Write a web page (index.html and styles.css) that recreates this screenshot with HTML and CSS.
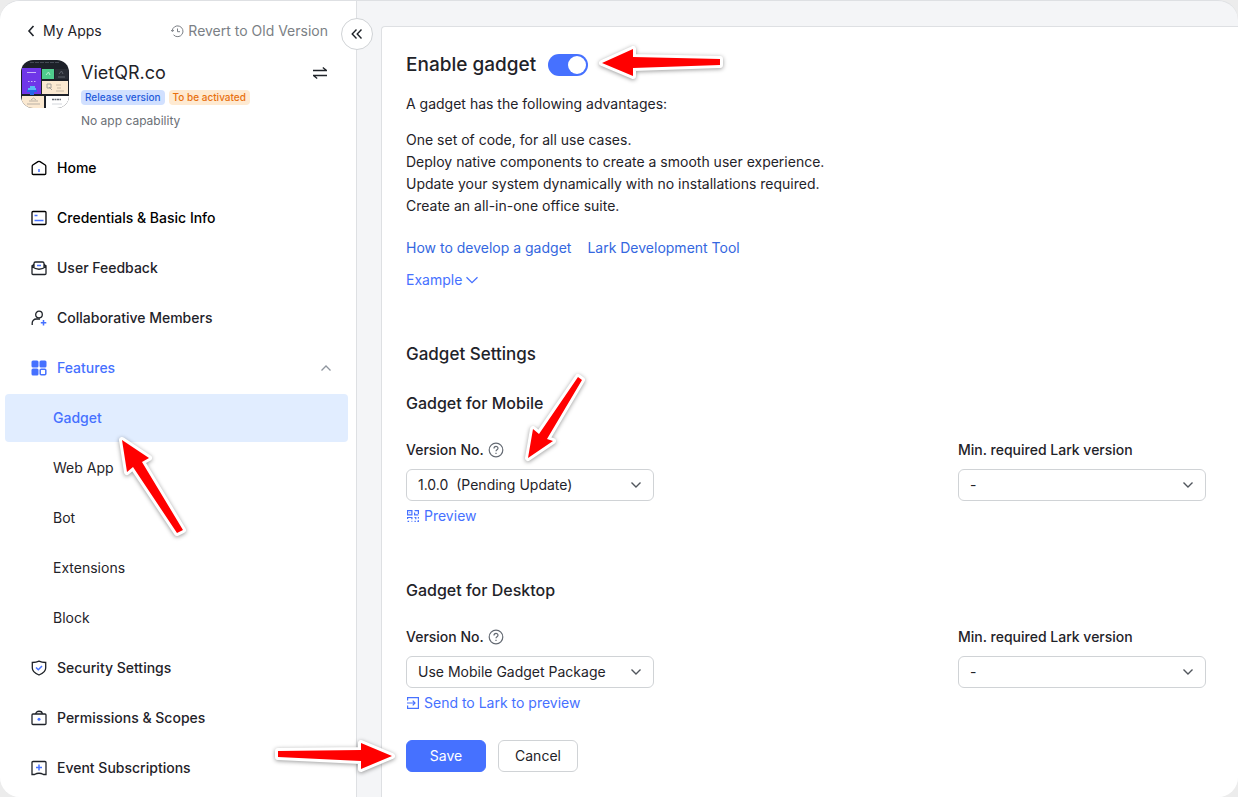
FILE: index.html
```html
<!DOCTYPE html>
<html lang="en">
<head>
    <meta charset="UTF-8">
    <meta name="viewport" content="width=device-width, initial-scale=1.0">
    <title>VietQR.co - Gadget</title>
    <link rel="stylesheet" href="styles.css">
</head>
<body>
    <div class="app">
        <aside class="sidebar">
            <button type="button" class="collapse" aria-label="Collapse sidebar">
                <svg width="14" height="14" viewBox="0 0 14 14"><path d="M6.5 2.5 2.2 7l4.300 4.500M11.500 2.500 7.200 7l4.300 4.500"/></svg>
            </button>
            <div class="sidebar-top">
                <a href="#" class="back">
                    <svg width="8" height="12" viewBox="0 0 8 12"><path d="M6.5 1 2 6l4.500 5"/></svg>
                    My Apps
                </a>
                <a href="#" class="revert">
                    <svg width="13" height="13" viewBox="0 0 13 13"><path d="M1.2 6A5.400 5.400 0 1 1 2.500 9.800M0 5l1.200 1.500L3 5.300M6.500 3.500v3.200H9"/></svg>
                    Revert to Old Version
                </a>
            </div>
            <div class="app-info">
                <svg class="logo" width="48" height="48" viewBox="0 0 48 48">
                    <rect width="48" height="48" fill="#1d2129"/>
                    <path d="M9 2.5h30" stroke="#454b56" stroke-dasharray="4 1"/>
                    <rect x="1" y="8" width="19" height="26" fill="#6f36e8"/>
                    <path d="M6 12.5h9" stroke="#c9b6f8"/>
                    <path d="M7 21.5h1.5M10 21.5h1.5M13 21.5h1.5" stroke="#c9b6f8"/>
                    <path d="M7 31v-3h2v-2h5v2h1v3z" fill="#58b9f5"/>
                    <path d="M6 30h10v2h-3v3H9v-3H6z" fill="#2467e8"/>
                    <rect x="21" y="9" width="12" height="10" fill="#4fcc8d"/>
                    <path d="m25 15 2.500-3 1.500 3" fill="none" stroke="#b5ecd0"/>
                    <rect x="34" y="9" width="13" height="10" fill="#292d35"/>
                    <path d="m38 14 2.5-3 1.5 3M37 17h7" fill="none" stroke="#5f646d"/>
                    <rect x="21" y="21" width="26" height="13" fill="#fbe9d1"/>
                    <path d="M26 24h4v4h-4zM28 27l3 3" fill="none" stroke="#a5a19c"/>
                    <path d="M35 25h5M36 28h4M35 31h8" stroke="#c9bba8"/>
                    <rect x="1" y="36" width="22" height="12" fill="#fbe9d1"/>
                    <path d="m10 40 2.5-2 2.500 2M8 41h9M6 44h13" fill="none" stroke="#b9b0a5"/>
                    <rect x="25" y="36" width="23" height="12" fill="#fff"/>
                    <path d="M31 39.500h9" stroke="#6d727a" stroke-width="1.500" stroke-dasharray="2 .5"/>
                    <path d="M31 44h10" stroke="#d4d7dc"/>
                </svg>
                <div class="app-text">
                    <div class="app-name">VietQR.co</div>
                    <div class="badges">
                        <span class="badge badge-blue">Release version</span>
                        <span class="badge badge-orange">To be activated</span>
                    </div>
                    <div class="capability">No app capability</div>
                </div>
                <button type="button" class="swap" aria-label="Switch app">
                    <svg width="14" height="14" viewBox="0 0 14 14"><path d="M0 4.5h13.5L9.8 1.500M14 9.500H.5l3.700 3"/></svg>
                </button>
            </div>
            <nav class="menu">
                <a href="#" class="item strong">
                    <svg class="icon" viewBox="0 0 16 16"><path d="M1.200 6.200Q1.200 5.500 1.800 5L7 1.600Q8 1 9 1.600L14.200 5Q14.800 5.500 14.800 6.200V13.500a1 1 0 0 1-1 1H2.200a1 1 0 0 1-1-1z"/><path class="accent" d="M8 9v3"/></svg>
                    Home
                </a>
                <a href="#" class="item strong">
                    <svg class="icon" viewBox="0 0 16 16"><rect x="1" y="1.5" width="14" height="13" rx="1"/><path class="accent" d="M3.500 5.500h3M3.500 10.500h9"/></svg>
                    Credentials &amp; Basic Info
                </a>
                <a href="#" class="item">
                    <svg class="icon" viewBox="0 0 16 16"><path d="M3 7V3.5A1.500 1.500 0 0 1 4.500 2h7A1.500 1.500 0 0 1 13 3.500V7M1 6.500c4.500 3.500 9.500 3.500 14 0v7a1 1 0 0 1-1 1H2a1 1 0 0 1-1-1zM1 6.500 3 4M15 6.500 13 4"/><path class="accent" d="M6 5.500h4"/></svg>
                    User Feedback
                </a>
                <a href="#" class="item">
                    <svg class="icon" viewBox="0 0 16 16"><circle cx="8" cy="4.500" r="3.300"/><path d="M1.200 15v-2a4 4 0 0 1 4-4H9"/><path class="accent" d="M12.500 10v5.500M9.800 12.800h5.500"/></svg>
                    Collaborative Members
                </a>
                <a href="#" class="item active">
                    <svg class="icon" viewBox="0 0 16 16"><g class="fill"><rect x=".5" y=".5" width="7" height="7" rx="1.500"/><rect x="8.500" y=".5" width="7" height="7" rx="1.500"/><rect x=".5" y="8.500" width="7" height="7" rx="1.500"/></g><rect class="accent" x="9.200" y="9.200" width="5.600" height="5.600" rx="1"/></svg>
                    Features
                    <svg class="toggle-arrow" width="10" height="6" viewBox="0 0 10 6"><path d="m.5 5.500 4.500-4.500 4.500 4.500"/></svg>
                </a>
                <a href="#" class="item sub selected">Gadget</a>
                <a href="#" class="item sub">Web App</a>
                <a href="#" class="item sub">Bot</a>
                <a href="#" class="item sub">Extensions</a>
                <a href="#" class="item sub">Block</a>
                <a href="#" class="item">
                    <svg class="icon" viewBox="0 0 16 16"><path d="M8 1.200c2 1 4.300 1.300 6.700 1.300V8c0 3.500-3.500 5.700-6.700 7C4.800 13.700 1.300 11.500 1.300 8V2.500C3.700 2.500 6 2.200 8 1.200z"/><path class="accent" d="m5 7.500 2.300 2.300L11 6"/></svg>
                    Security Settings
                </a>
                <a href="#" class="item">
                    <svg class="icon" viewBox="0 0 16 16"><rect x="1" y="4" width="14" height="10.500" rx="1"/><path d="M4.700 4C4.700 .3 11.300 .3 11.300 4"/><circle class="dot" cx="8" cy="9.200" r="1.500"/></svg>
                    Permissions &amp; Scopes
                </a>
                <a href="#" class="item">
                    <svg class="icon" viewBox="0 0 16 16"><path d="M2 1.500h12a1 1 0 0 1 1 1v12h-2.500Q8 12 3.500 14.500H1v-12a1 1 0 0 1 1-1z"/><path class="accent" d="M8 4.500v6M5 7.500h6"/></svg>
                    Event Subscriptions
                </a>
            </nav>
        </aside>

        <main class="main">
            <form class="panel">
                <div class="title-row">
                    <label class="title" for="enable">Enable gadget</label>
                    <input type="checkbox" class="switch" id="enable" role="switch" checked>
                </div>
                <p class="intro">A gadget has the following advantages:</p>
                <p class="advantages">
                    One set of code, for all use cases.<br>
                    Deploy native components to create a smooth user experience.<br>
                    Update your system dynamically with no installations required.<br>
                    Create an all-in-one office suite.
                </p>
                <div class="links">
                    <a href="#">How to develop a gadget</a>
                    <a href="#">Lark Development Tool</a>
                </div>
                <a href="#" class="example">
                    Example
                    <svg width="12" height="8" viewBox="0 0 12 8"><path d="m.5 1.200 5.500 5.500 5.500-5.500"/></svg>
                </a>

                <h2>Gadget Settings</h2>

                <section class="platform">
                    <h3>Gadget for Mobile</h3>
                    <div class="fields">
                        <div class="field">
                            <div class="field-label">
                                <label for="mobile-version">Version No.</label>
                                <svg class="help" width="16" height="16" viewBox="0 0 16 16"><circle cx="8" cy="8" r="6.800"/><path d="M6 6.500C6 3.800 10 3.800 10 6.300 10 7.800 8 7.800 8 9.300M8 10.700v1.200"/></svg>
                            </div>
                            <div class="select">
                                <select id="mobile-version"><option>1.0.0 &nbsp;(Pending Update)</option></select>
                                <svg width="10" height="6" viewBox="0 0 10 6"><path d="m.5 .5 4.500 4.500L9.500 .5"/></svg>
                            </div>
                            <a href="#" class="preview">
                                <svg width="14" height="14" viewBox="0 0 14 14"><path d="M1.600 1.600h4.300v4.300H1.600zM8.600 1.600h3.800v3.300M8.600 3.500v2.400h3.800M1.600 10V8.500h4.300v1.800M1.600 12.400h1.500M5.500 12.400h.8M8.500 8.500h1.300v1.800M12.400 8v1.500M8.500 12.400h1.300M12.400 11.200v1.200h-1M3.500 3.700h.7"/></svg>
                                Preview
                            </a>
                        </div>
                        <div class="field">
                            <div class="field-label"><label for="mobile-min">Min. required Lark version</label></div>
                            <div class="select">
                                <select id="mobile-min"><option>-</option></select>
                                <svg width="10" height="6" viewBox="0 0 10 6"><path d="m.5 .5 4.500 4.500L9.500 .5"/></svg>
                            </div>
                        </div>
                    </div>
                </section>

                <section class="platform">
                    <h3>Gadget for Desktop</h3>
                    <div class="fields">
                        <div class="field">
                            <div class="field-label">
                                <label for="desktop-version">Version No.</label>
                                <svg class="help" width="16" height="16" viewBox="0 0 16 16"><circle cx="8" cy="8" r="6.800"/><path d="M6 6.500C6 3.800 10 3.800 10 6.300 10 7.800 8 7.800 8 9.300M8 10.700v1.200"/></svg>
                            </div>
                            <div class="select">
                                <select id="desktop-version"><option>Use Mobile Gadget Package</option></select>
                                <svg width="10" height="6" viewBox="0 0 10 6"><path d="m.5 .5 4.500 4.500L9.500 .5"/></svg>
                            </div>
                            <a href="#" class="preview">
                                <svg width="14" height="14" viewBox="0 0 14 14"><path d="M1.600 4.500V1.600h10.800v10.800H1.600V9.500M1 7h8M6.700 4.700 9 7 6.700 9.300"/></svg>
                                Send to Lark to preview
                            </a>
                        </div>
                        <div class="field">
                            <div class="field-label"><label for="desktop-min">Min. required Lark version</label></div>
                            <div class="select">
                                <select id="desktop-min"><option>-</option></select>
                                <svg width="10" height="6" viewBox="0 0 10 6"><path d="m.5 .5 4.500 4.500L9.500 .5"/></svg>
                            </div>
                        </div>
                    </div>
                </section>

                <div class="actions">
                    <button type="button" class="btn btn-primary">Save</button>
                    <button type="button" class="btn">Cancel</button>
                </div>
            </form>
        </main>
    </div>

    <!-- tutorial arrows -->
    <svg class="arrows" width="730" height="790" viewBox="0 0 730 790" aria-hidden="true">
        <path d="M602 63 633 49V57L720 59V65L633 68V76z"/>
        <path d="M122 440 149 458 142 462 183 530 177 533 133 467 127 472z"/>
        <path d="M528 458 533 429 539 434 578 377 582 380 547 439 553 441z"/>
        <path d="M392 756 361 743V750L278 751V757L361 761V769z"/>
    </svg>
</body>
</html>
```
FILE: styles.css
```css
* {
    box-sizing: border-box;
}
body {
    margin: 0;
    background: #ececec;
    color: #1f2329;
    font-family: Inter, "Liberation Sans", sans-serif;
    font-size: 14px;
    line-height: 22px;
}
a {
    color: inherit;
    text-decoration: none;
}
button {
    padding: 0;
    border: none;
    background: none;
    color: inherit;
    font: inherit;
    cursor: pointer;
}
svg {
    flex: none;
    fill: none;
    stroke: currentColor;
}
.app {
    display: flex;
    min-height: 100vh;
    border: solid #dee0e3;
    border-width: 1px 0 0;
    border-radius: 20px;
    background: #f4f5f7;
    overflow: hidden;
}

/* sidebar */
.sidebar {
    position: relative;
    flex: none;
    width: 357px;
    padding-top: 19px;
    border-right: 1px solid #dee0e3;
    background: #fff;
}
.collapse {
    position: absolute;
    top: 17px;
    right: -17px;
    display: flex;
    align-items: center;
    justify-content: center;
    width: 32px;
    height: 32px;
    border: 1px solid #d0d3d6;
    border-radius: 50%;
    background: #fff;
}
.collapse svg {
    stroke-width: 1.4;
}
.sidebar-top {
    display: flex;
    align-items: center;
    justify-content: space-between;
    padding: 0 28px 0 27px;
}
.back, .revert {
    display: flex;
    align-items: center;
}
.back {
    gap: 8px;
}
.back svg {
    stroke-width: 1.6;
}
.revert {
    gap: 4px;
    color: #7b7f85;
}
.app-info {
    display: flex;
    align-items: flex-start;
    padding: 18px 29px 0 21px;
}
.logo {
    border-radius: 12px;
    stroke: none;
}
.app-text {
    flex: 1;
    margin-left: 12px;
}
.app-name {
    font-size: 18px;
    line-height: 26px;
}
.badges {
    display: flex;
    gap: 4px;
    margin-top: 4px;
}
.badge {
    padding: 0 4px;
    border-radius: 4px;
    font-size: 10px;
    font-weight: 500;
    line-height: 15px;
}
.badge-blue {
    background: #d1e0ff;
    color: #245bdb;
}
.badge-orange {
    background: #feead2;
    color: #e8700f;
}
.capability {
    margin-top: 5px;
    color: #6b6f76;
    font-size: 12px;
}
.swap {
    display: flex;
    margin-top: 6px;
}
.swap svg {
    stroke-width: 1.3;
}
.menu {
    display: flex;
    flex-direction: column;
    gap: 2px;
    padding: 12px 8px 5px 5px;
}
.item {
    display: flex;
    align-items: center;
    gap: 10px;
    height: 48px;
    padding: 0 17px 0 26px;
    border-radius: 4px;
    font-weight: 500;
}
.icon {
    width: 16px;
    height: 16px;
    stroke-width: 1.3;
}
.accent {
    stroke: #4671ff;
    stroke-width: 1.5;
}
.dot, .fill {
    fill: #4671ff;
    stroke: none;
}
.strong {
    color: #000;
}
.active, .selected {
    color: #4671ff;
}
.toggle-arrow {
    margin-left: auto;
    color: #8f959e;
    stroke-width: 1.3;
}
.sub {
    padding-left: 48px;
    font-weight: 400;
}
.selected {
    background: #e1edff;
    font-weight: 500;
}

/* content */
.main {
    display: flex;
    flex: 1;
    padding: 25px 0 0 24px;
}
.panel {
    flex: 1;
    padding: 24px 32px 25px 24px;
    border: solid #dee0e3;
    border-width: 1px 0 0 1px;
    border-top-left-radius: 4px;
    background: #fff;
}
.title-row {
    display: flex;
    align-items: center;
    gap: 12px;
}
.title {
    font-size: 19px;
    font-weight: 500;
    line-height: 28px;
}
.switch {
    appearance: none;
    width: 40px;
    height: 22px;
    margin: 0;
    padding: 2px;
    border-radius: 11px;
    background: #bbbfc4;
    cursor: pointer;
}
.switch::before {
    content: "";
    display: block;
    width: 18px;
    height: 18px;
    border-radius: 50%;
    background: #fff;
}
.switch:checked {
    background: #4671ff;
}
.switch:checked::before {
    margin-left: auto;
}
.intro, .advantages {
    margin: 14px 0 0;
}
.links {
    display: flex;
    gap: 16px;
    margin-top: 20px;
    color: #3467e0;
}
.example {
    display: flex;
    align-items: center;
    gap: 4px;
    width: fit-content;
    margin-top: 10px;
    color: #4671ff;
}
.example svg {
    stroke-width: 1.3;
}
h2 {
    margin: 49px 0 23px;
    font-size: 17px;
    font-weight: 500;
    line-height: 28px;
}
h3 {
    margin: 0 0 24px;
    font-size: 16px;
    font-weight: 500;
    line-height: 24px;
}
.platform + .platform {
    margin-top: 51px;
}
.fields {
    display: flex;
    justify-content: space-between;
    gap: 24px;
}
.field {
    width: 248px;
}
.field-label {
    display: flex;
    align-items: center;
    gap: 4px;
    margin-bottom: 8px;
    font-weight: 500;
}
.help {
    color: #646a73;
    stroke-width: 1.2;
}
.select {
    position: relative;
}
.select select {
    appearance: none;
    display: block;
    width: 100%;
    height: 32px;
    padding: 0 32px 0 11px;
    border: 1px solid #d0d3d6;
    border-radius: 6px;
    background: #fff;
    color: inherit;
    font: inherit;
}
.select svg {
    position: absolute;
    top: 13px;
    right: 13px;
    color: #51565d;
    stroke-width: 1.4;
    pointer-events: none;
}
.preview {
    display: flex;
    align-items: center;
    gap: 4px;
    width: fit-content;
    margin-top: 4px;
    color: #4671ff;
}
.preview svg {
    stroke-width: 1.2;
}
.actions {
    display: flex;
    gap: 12px;
    margin-top: 26px;
}
.btn {
    width: 80px;
    height: 32px;
    border: 1px solid #d0d3d6;
    border-radius: 6px;
    background: #fff;
}
.btn-primary {
    border-color: #4671ff;
    background: #4671ff;
    color: #fff;
}

/* arrows drawn over the page */
.arrows {
    position: absolute;
    top: 0;
    left: 0;
    fill: #f00;
    stroke: #fff;
    stroke-width: 6;
    stroke-linejoin: round;
    paint-order: stroke;
    filter: drop-shadow(0 1px 2px rgba(0, 0, 0, 0.4));
    pointer-events: none;
}
```
